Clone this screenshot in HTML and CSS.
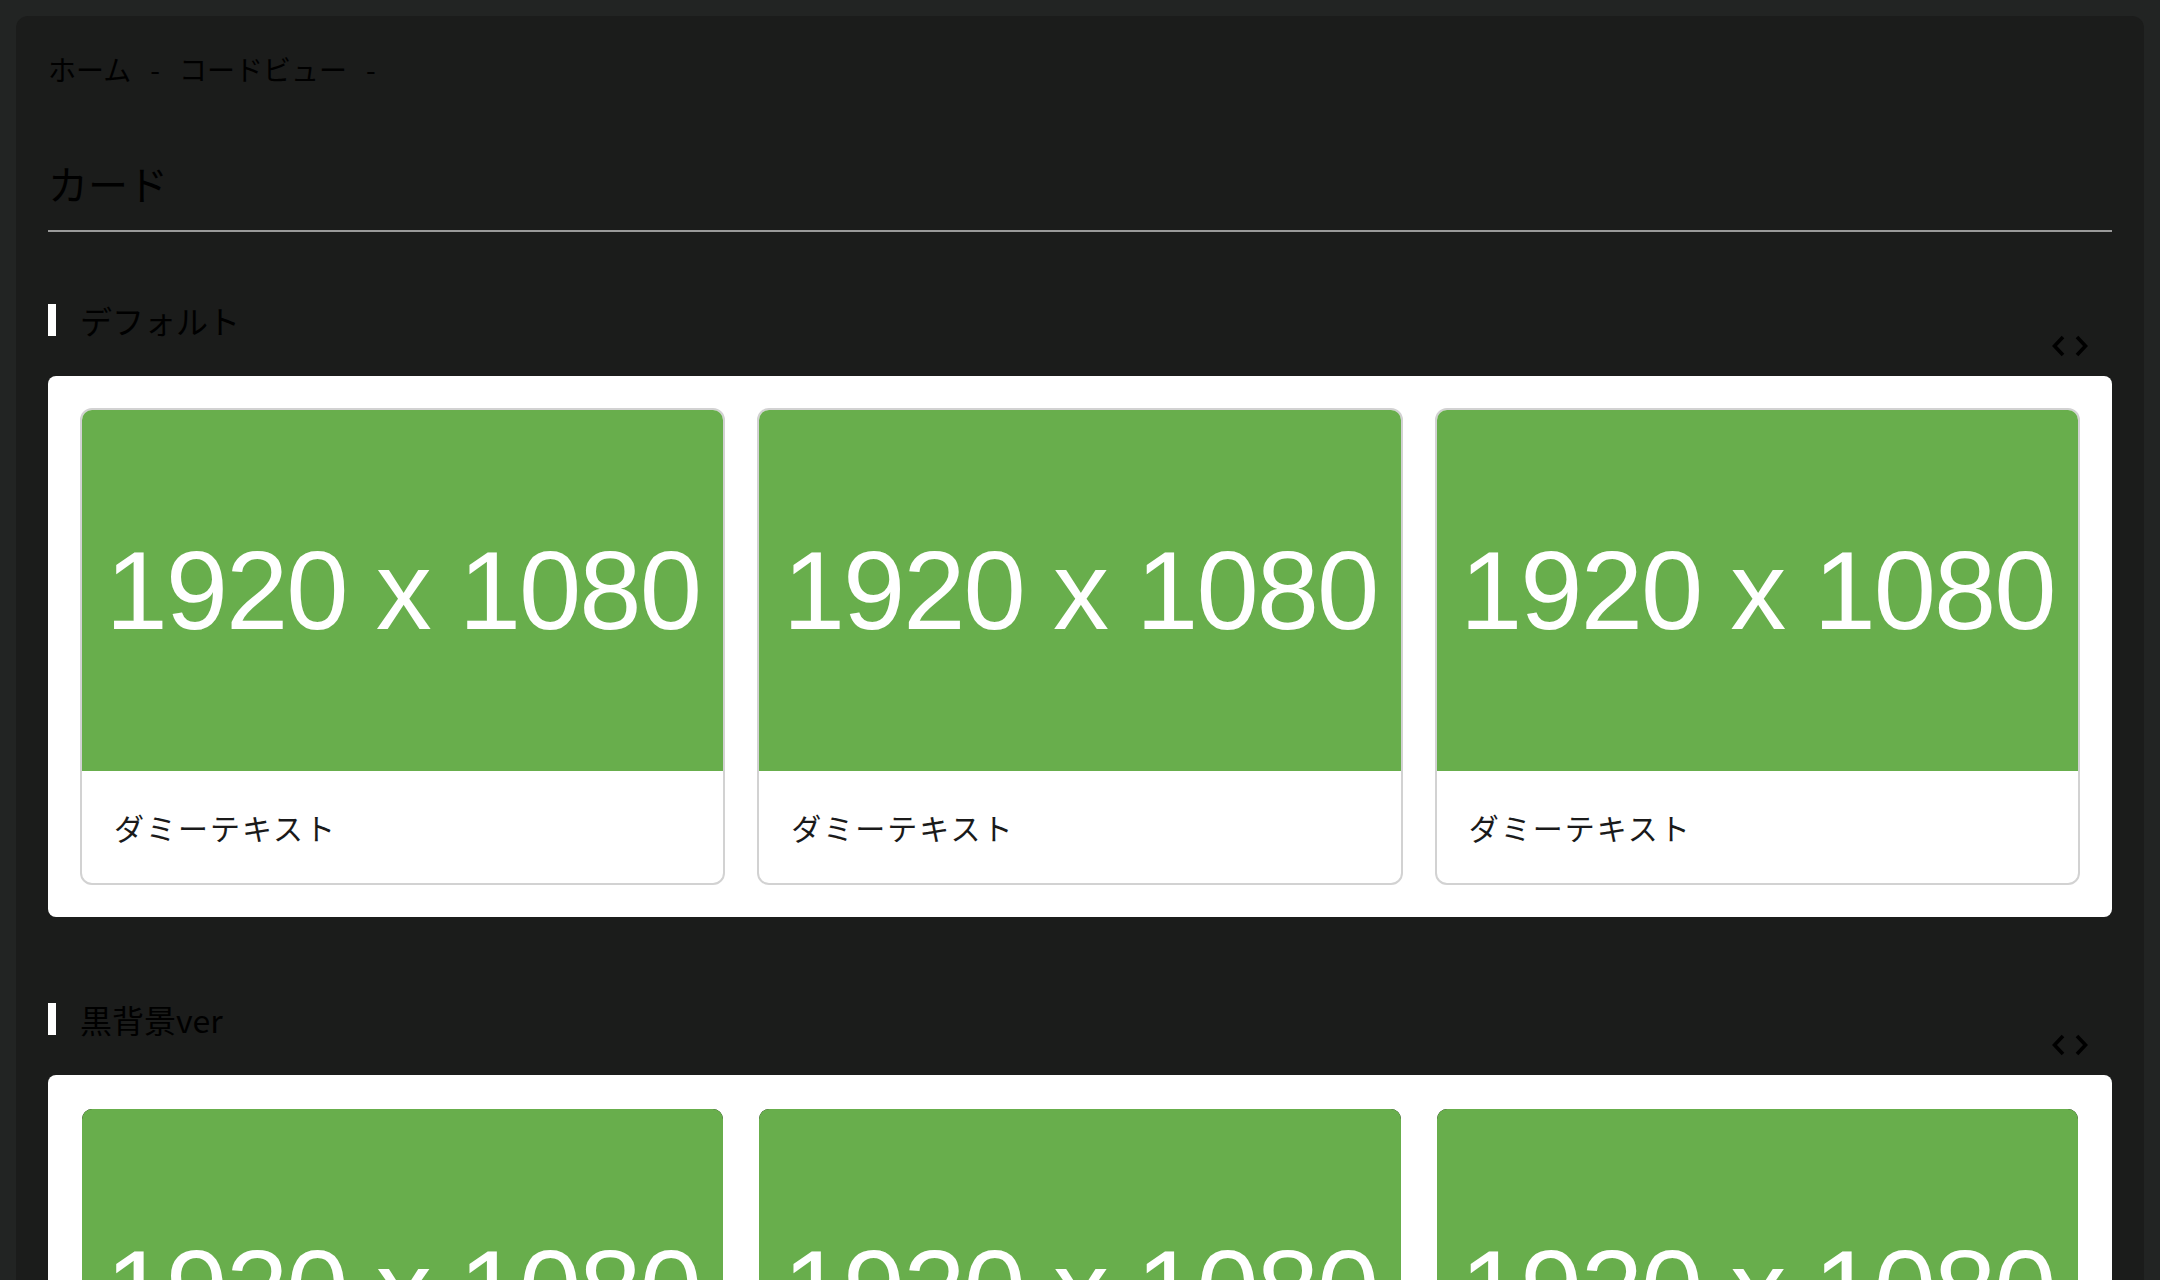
FILE: index.html
```html
<!DOCTYPE html>
<html lang="ja">
<head>
<meta charset="utf-8">
<title>カード</title>
<link rel="stylesheet" href="styles.css">
</head>
<body>
<div class="panel">
  <nav class="breadcrumb">
    <span>ホーム</span><span class="sep">-</span><span>コードビュー</span><span class="sep">-</span>
  </nav>
  <h1 class="page-title">カード</h1>

  <section class="section">
    <div class="section-head">
      <h2 class="section-title"><span class="bar"></span>デフォルト</h2>
      <svg class="code-icon" width="36" height="22" viewBox="0 0 36 22"><polyline points="11,2 2.5,11 11,20" /><polyline points="25,2 33.5,11 25,20" /></svg>
    </div>
    <div class="box">
      <div class="card">
        <div class="thumb">1920 x 1080</div>
        <div class="card-body">ダミーテキスト</div>
      </div>
      <div class="card">
        <div class="thumb">1920 x 1080</div>
        <div class="card-body">ダミーテキスト</div>
      </div>
      <div class="card">
        <div class="thumb">1920 x 1080</div>
        <div class="card-body">ダミーテキスト</div>
      </div>
    </div>
  </section>

  <section class="section section-dark">
    <div class="section-head">
      <h2 class="section-title"><span class="bar"></span>黒背景ver</h2>
      <svg class="code-icon" width="36" height="22" viewBox="0 0 36 22"><polyline points="11,2 2.5,11 11,20" /><polyline points="25,2 33.5,11 25,20" /></svg>
    </div>
    <div class="box">
      <div class="card card-dark">
        <div class="thumb">1920 x 1080</div>
        <div class="card-body">ダミーテキスト</div>
      </div>
      <div class="card card-dark">
        <div class="thumb">1920 x 1080</div>
        <div class="card-body">ダミーテキスト</div>
      </div>
      <div class="card card-dark">
        <div class="thumb">1920 x 1080</div>
        <div class="card-body">ダミーテキスト</div>
      </div>
    </div>
  </section>
</div>
</body>
</html>
```

FILE: styles.css
```css
html, body {
  margin: 0;
  padding: 0;
}
html {
  overflow: hidden;
}
body {
  background: #222423;
  padding: 16px;
  font-family: "Noto Sans CJK JP", "Noto Sans", sans-serif;
  color: #000;
}
.panel {
  background: #1b1c1b;
  border-radius: 12px;
  padding: 32px 32px 80px;
}
.breadcrumb {
  display: flex;
  gap: 19px;
  font-size: 28px;
  line-height: 42px;
  color: #000;
}
.page-title {
  margin: 63px 0 0;
  font-size: 40px;
  line-height: 60px;
  font-weight: 400;
  color: #000;
  padding-bottom: 17px;
  border-bottom: 2px solid #9a9a9a;
}
.section {
  margin-top: 72px;
}
.section + .section {
  margin-top: 86px;
}
.section-head {
  display: flex;
  justify-content: space-between;
  align-items: flex-start;
  margin-bottom: 19px;
}
.section-title {
  margin: 0;
  display: flex;
  align-items: center;
  gap: 24px;
  font-size: 32px;
  line-height: 32px;
  font-weight: 400;
  color: #000;
}
.bar {
  width: 8px;
  height: 32px;
  background: #fff;
}
.code-icon {
  margin-top: 31px;
  margin-right: 24px;
  fill: none;
  stroke: #000;
  stroke-width: 3.6;
}
.box {
  background: #fff;
  border-radius: 8px;
  padding: 32px;
  display: grid;
  grid-template-columns: repeat(3, 1fr);
  gap: 32px;
}
.card {
  border: 2px solid #d2d2d2;
  border-radius: 12px;
  overflow: hidden;
  background: #fff;
}
.thumb {
  aspect-ratio: 16 / 9;
  background: #68ae4c;
  color: #fff;
  display: flex;
  align-items: center;
  justify-content: center;
  font-family: "Liberation Sans", Arial, sans-serif;
  font-size: 112px;
  letter-spacing: -2px;
  white-space: nowrap;
}
.card-body {
  padding: 32px;
  font-size: 30px;
  letter-spacing: 2px;
  line-height: 48px;
  color: #1a1a1a;
}
.card-dark {
  border-color: #fff;
  background: #000;
}
.card-dark .card-body {
  color: #fff;
}
```
